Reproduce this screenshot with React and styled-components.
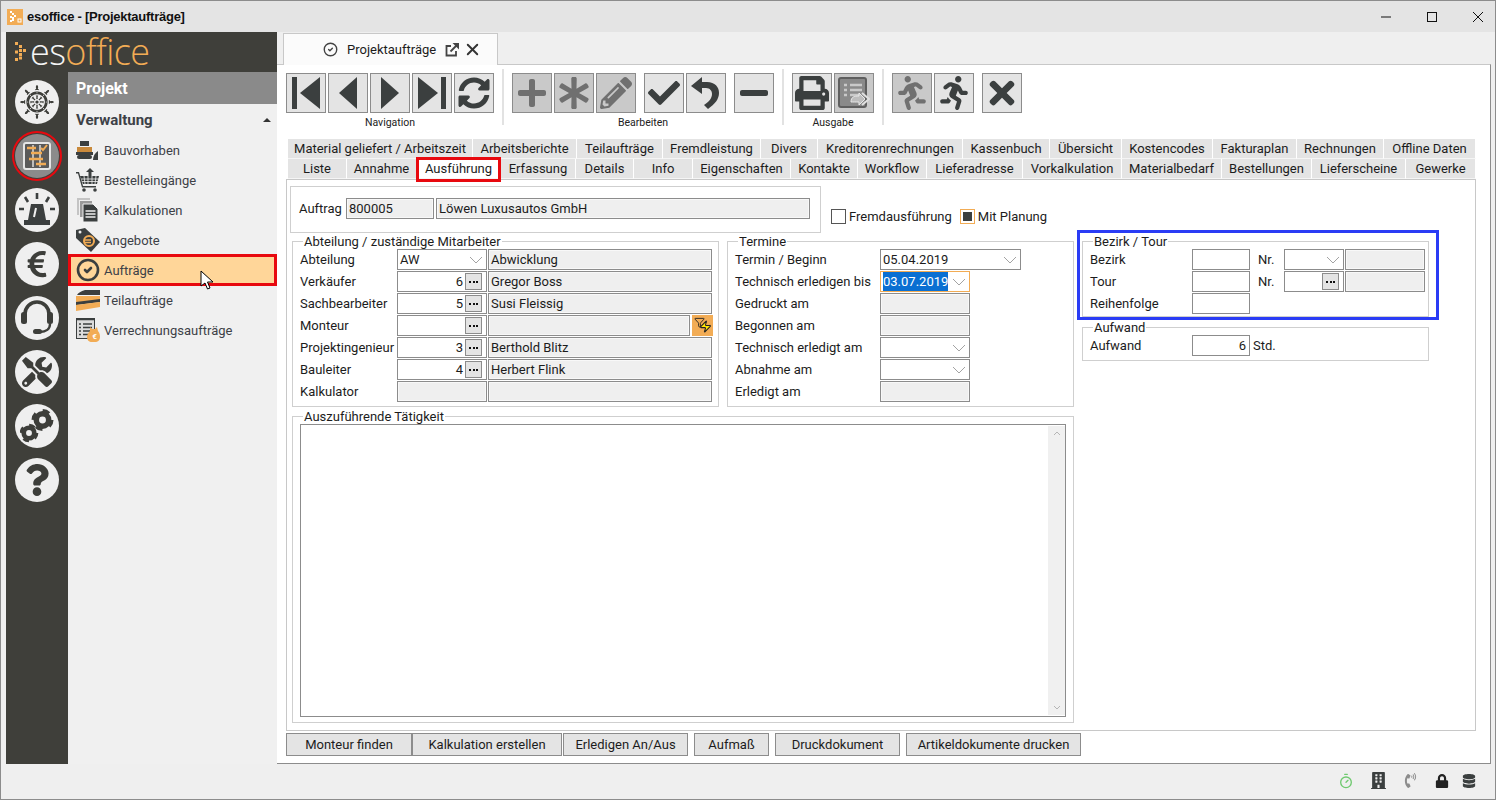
import React from 'react';
import styled, { createGlobalStyle } from 'styled-components';
import { GiShipWheel } from 'react-icons/gi';
import {
  FaEuroSign, FaTools, FaQuestion, FaPrint, FaSyncAlt, FaCheck, FaTimes, FaPlus, FaAsterisk,
  FaPencilAlt, FaMinus, FaRunning, FaLock, FaPhoneVolume, FaDatabase, FaBuilding,
} from 'react-icons/fa';
import { CircleCheck, Timer, X, Filter, Zap } from 'lucide-react';

const DARK = '#3b3f3f';
const ORANGE = '#f2ac55';

const GlobalStyle = createGlobalStyle`
  html, body { margin: 0; padding: 0; background: #efefef; }
  * { box-sizing: border-box; }
  body { font-family: Roboto, "Liberation Sans", sans-serif; font-size: 13px; color: #1c1c1c; }
`;

const Window = styled.div`
  width: 1496px;
  height: 800px;
  border: 1px solid #8c8c8c;
  background: #efefef;
  display: flex;
  flex-direction: column;
  overflow: hidden;
  position: relative;
`;

const TitleBar = styled.div`
  height: 31px;
  flex: none;
  background: #e4e4e4;
  display: flex;
  align-items: center;
  padding-left: 6px;
`;

const TitleText = styled.span`
  font-family: "Liberation Sans", Arial, sans-serif;
  font-size: 13px;
  font-weight: 700;
  letter-spacing: -0.25px;
  margin-left: 4px;
  color: #111;
`;

const WindowControls = styled.div`
  margin-left: auto;
  display: flex;
  align-items: center;
  padding-right: 12px;
  gap: 36px;
`;

const Workspace = styled.div`
  display: flex;
  height: 732px;
  flex: none;
  padding: 0 4px 0 5px;
`;

const Sidebar = styled.aside`
  width: 271px;
  flex: none;
  background: #3f3f3a;
  display: flex;
  flex-direction: column;
`;

const LogoBar = styled.div`
  height: 40px;
  flex: none;
  display: flex;
  align-items: center;
  padding-left: 9px;
  gap: 2px;
`;

const LogoText = styled.span`
  font-family: "Open Sans", sans-serif;
  font-weight: 300;
  font-size: 36px;
  line-height: 40px;
  letter-spacing: -0.6px;
  color: ${ORANGE};
  b { font-weight: 300; color: #f4f4f4; }
`;

const SideBody = styled.div`
  flex: 1;
  display: flex;
  min-height: 0;
`;

const Rail = styled.nav`
  width: 62px;
  flex: none;
  display: flex;
  flex-direction: column;
  align-items: center;
  padding-top: 8px;
  gap: 10px;
`;

const RailButton = styled.div`
  width: 44px;
  height: 44px;
  border-radius: 50%;
  background: ${({ $active }) => ($active ? '#8b8b8b' : '#efefef')};
  color: #3d3e3a;
  display: flex;
  align-items: center;
  justify-content: center;
  position: relative;
  &::after {
    content: ${({ $active }) => ($active ? '""' : 'none')};
    position: absolute;
    inset: -3px;
    border: 2.5px solid #e8090f;
    border-radius: 50%;
  }
`;

const MenuPanel = styled.div`
  flex: 1;
  background: #f0f0f0;
`;

const MenuHeader = styled.div`
  height: 32px;
  background: #8a8a8a;
  color: #fff;
  font-size: 16px;
  font-weight: 700;
  line-height: 34px;
  padding-left: 8px;
`;

const MenuSection = styled.div`
  height: 31px;
  display: flex;
  align-items: center;
  justify-content: space-between;
  padding: 1px 6px 0 8px;
  font-size: 15px;
  font-weight: 700;
  color: #3d4147;
  &::after {
    content: '';
    border: 4px solid transparent;
    border-top: 0;
    border-bottom: 4px solid #333;
  }
`;

const MenuItem = styled.div`
  height: ${({ $active }) => ($active ? '32px' : '30px')};
  margin: ${({ $active }) => ($active ? '-1px 0' : '0')};
  display: flex;
  align-items: center;
  padding-left: ${({ $active }) => ($active ? '5px' : '8px')};
  gap: 4px;
  color: #3d4147;
  font-size: 13px;
  background: ${({ $active }) => ($active ? '#ffd699' : 'transparent')};
  border: ${({ $active }) => ($active ? '3px solid #e8090f' : '0')};
  position: relative;
`;

const MenuIcon = styled.span`
  width: 24px;
  height: 24px;
  flex: none;
  display: flex;
  align-items: center;
  justify-content: center;
`;

const Cursor = styled.svg`
  position: absolute;
  left: 129px;
  top: 13px;
`;

const Main = styled.main`
  flex: 1;
  min-width: 0;
  display: flex;
  flex-direction: column;
`;

const TabStrip = styled.div`
  height: 32px;
  flex: none;
  padding: 1px 0 0 6px;
  display: flex;
`;

const DocTab = styled.div`
  width: 215px;
  height: 32px;
  background: #fbfbfb;
  border: 1px solid #c8c8c8;
  border-bottom: 0;
  display: flex;
  align-items: center;
  padding-left: 39px;
  font-size: 13px;
  position: relative;
  z-index: 1;
`;

const DocTitle = styled.span`
  margin: 0 9px 0 9px;
`;

const Content = styled.div`
  flex: 1;
  min-height: 0;
  background: #fff;
  border-top: 1px solid #c8c8c8;
  border-right: 1px solid #8c8c8c;
  border-bottom: 1px solid #8c8c8c;
  padding: 4px 0 0 9px;
`;

const Toolbar = styled.div`
  height: 70px;
  display: flex;
`;

const ToolGroup = styled.div`
  display: flex;
  flex-direction: column;
  align-items: center;
  padding-top: 4px;
`;

const ToolRow = styled.div`
  display: flex;
  gap: 2px;
`;

const ToolButton = styled.div`
  width: 40px;
  height: 40px;
  border: 1px solid #8c8c8c;
  background: ${({ $disabled }) => ($disabled ? '#c9c9c9' : '#e4e4e4')};
  color: ${({ $disabled }) => ($disabled ? '#707070' : DARK)};
  margin-left: ${({ $push }) => ($push ? '6px' : '0')};
  display: flex;
  align-items: center;
  justify-content: center;
`;

const ToolLabel = styled.span`
  font-size: 10.5px;
  margin-top: 3px;
  color: #222;
`;

const ToolSeparator = styled.div`
  width: 2px;
  height: 56px;
  margin: 0 8px 0 8px;
  background: #e2e2e2;
`;

const TabRow = styled.div`
  height: 20px;
  display: flex;
  padding-left: 2px;
`;

const Tab = styled.div`
  width: ${({ $w }) => $w}px;
  flex: none;
  display: flex;
  align-items: center;
  justify-content: center;
  background: ${({ $active }) => ($active ? '#fff' : '#e4e4e4')};
  border-right: 1px solid #fff;
  border-bottom: 1px solid #f5f5f5;
  font-size: 13px;
  white-space: nowrap;
  position: relative;
  z-index: ${({ $active }) => ($active ? 2 : 0)};
  &::after {
    content: ${({ $active }) => ($active ? '""' : 'none')};
    position: absolute;
    inset: -2px -1px -4px -1px;
    border: 3px solid #e8090f;
  }
`;

const Panel = styled.div`
  width: 1190px;
  height: 552px;
  border: 1px solid #c8c8c8;
  padding: 6px 0 0 3px;
  display: flex;
  flex-direction: column;
`;

const TopRow = styled.div`
  display: flex;
  height: 48px;
`;

const PlainGroup = styled.div`
  width: 531px;
  height: 47px;
  border: 1px solid #cfcfcf;
  padding: 11px 0 0 8px;
  display: flex;
  gap: 2px;
`;

const CheckRow = styled.div`
  display: flex;
  align-items: flex-start;
  margin: 23px 0 0 10px;
`;

const CheckItem = styled.label`
  display: flex;
  align-items: center;
  gap: 3px;
  margin-right: 8px;
  line-height: 15px;
`;

const CheckBox = styled.span`
  width: 15px;
  height: 15px;
  border: 1px solid ${({ $checked }) => ($checked ? ORANGE : '#555')};
  background: #fff;
  display: flex;
  align-items: center;
  justify-content: center;
  &::after {
    content: ${({ $checked }) => ($checked ? '""' : 'none')};
    width: 9px;
    height: 9px;
    background: ${DARK};
  }
`;

const Columns = styled.div`
  display: flex;
  gap: 8px;
  margin-left: 2px;
`;

const LeftColumn = styled.div`
  width: 782px;
  display: flex;
  flex-direction: column;
  gap: 2px;
`;

const RightColumn = styled.div`
  width: 347px;
  display: flex;
  flex-direction: column;
  gap: 3px;
`;

const GroupRow = styled.div`
  display: flex;
  gap: 8px;
`;

const Group = styled.fieldset`
  width: ${({ $w }) => $w}px;
  min-width: 0;
  margin: 0;
  border: 1px solid #cfcfcf;
  padding: 0 0 ${({ $pb }) => $pb ?? 4}px 7px;
  display: flex;
  flex-direction: column;
  gap: 1px;
  legend {
    margin-left: 3px;
    padding: 0 1px;
    height: 15px;
    line-height: 15px;
    font-size: 13px;
  }
`;

const FieldRow = styled.div`
  display: flex;
  height: 21px;
  align-items: stretch;
  gap: ${({ $gap }) => $gap ?? 1}px;
`;

const Label = styled.span`
  width: ${({ $w }) => $w}px;
  flex: none;
  line-height: 21px;
  white-space: nowrap;
`;

const Field = styled.div`
  width: ${({ $w }) => $w}px;
  flex: none;
  height: ${({ $h }) => $h ?? 21}px;
  border: 1px solid ${({ $focus }) => ($focus ? ORANGE : '#8c8c8c')};
  background: ${({ $off }) => ($off ? '#efefef' : '#fff')};
  box-shadow: ${({ $off }) => ($off ? 'inset 0 0 0 1px #f8f8f8' : 'none')};
  display: flex;
  align-items: center;
  justify-content: ${({ $right }) => ($right ? 'flex-end' : 'space-between')};
  padding: ${({ $right }) => ($right ? '0 3px 0 2px' : '0 0 0 2px')};
  line-height: 19px;
  white-space: nowrap;
  position: relative;
`;

const Selected = styled.span`
  background: #0a6fd2;
  color: #fff;
`;

const Chevron = styled.svg`
  flex: none;
  margin-right: 3px;
`;

const DotsButton = styled.span`
  width: 17px;
  height: 17px;
  flex: none;
  margin: 0 1px 0 2px;
  border: 1px solid #8c8c8c;
  background: #e4e4e4;
  display: flex;
  align-items: center;
  justify-content: center;
  gap: 1.5px;
  i {
    width: 2px;
    height: 2px;
    background: #111;
  }
`;

const FilterButton = styled.div`
  width: 21px;
  height: 21px;
  flex: none;
  margin-left: 1px;
  background: ${ORANGE};
  position: relative;
`;

const MarkedBox = styled.div`
  position: relative;
  &::after {
    content: '';
    position: absolute;
    inset: -4px -10px -3px -5px;
    border: 3px solid #2a3cf5;
    pointer-events: none;
  }
`;

const TextBox = styled.div`
  width: 766px;
  height: 293px;
  border: 1px solid #8c8c8c;
  display: flex;
  justify-content: flex-end;
  padding: 1px 0 1px 0;
`;

const ScrollBar = styled.div`
  width: 17px;
  background: #f0f0f0;
  display: flex;
  flex-direction: column;
  justify-content: space-between;
  align-items: center;
  padding: 5px 0;
`;

const ActionRow = styled.div`
  display: flex;
  margin-top: 2px;
`;

const ActionButton = styled.div`
  width: ${({ $w }) => $w}px;
  height: 23px;
  margin-left: ${({ $ml }) => $ml ?? 0}px;
  border: 1px solid #8c8c8c;
  background: #e4e4e4;
  display: flex;
  align-items: center;
  justify-content: center;
  white-space: nowrap;
`;

const StatusBar = styled.footer`
  flex: 1;
  display: flex;
  align-items: center;
  justify-content: flex-end;
  padding: 0 15px 2px 0;
`;

const StatusSlot = styled.span`
  width: ${({ $w }) => $w}px;
  display: flex;
  justify-content: center;
  align-items: center;
  position: relative;
`;

/* drawn icons */
const StepIcon = ({ dir }) => (
  <svg width="30" height="32" viewBox="0 0 30 32" style={dir === 'r' ? { transform: 'scaleX(-1)' } : undefined}>
    <path fill="currentColor" d="M1 0h5v32H1zM9 16 29 0v32z" />
  </svg>
);

const ArrowIcon = ({ dir }) => (
  <svg width="18" height="32" viewBox="0 0 18 32" style={dir === 'r' ? { transform: 'scaleX(-1)' } : undefined}>
    <path fill="currentColor" d="M0 16 18 0v32z" />
  </svg>
);

const UndoIcon = () => (
  <svg width="30" height="32" viewBox="0 0 30 32">
    <path fill="currentColor" d="M0 9 11 0v5h5c8 0 12 5 12 11 0 6-4 11-11 16l-4-4c5-3 8-7 8-11 0-3-2-6-6-6h-4v6z" />
  </svg>
);

const ListOutIcon = () => (
  <svg width="32" height="32" viewBox="0 0 32 32">
    <rect x="1" y="1" width="27" height="29" rx="2" fill="#8a8a8a" stroke="#5f5f5f" strokeWidth="2" />
    <path stroke="#c9c9c9" strokeWidth="2.4" d="M6 8h3M12 8h12M6 13h3M12 13h12M6 18h3M12 18h9" />
    <path fill="#bdbdbd" stroke="#e8e8e8" d="M13 25c0-5 3-6 8-6v-3l6 6-6 6v-3c-3 0-6 0-8 0z" />
    <path fill="none" stroke="#e0e0e0" strokeWidth="2" d="m24 16 7 6-7 6" />
  </svg>
);

const Dropdown = () => (
  <Chevron width="14" height="8" viewBox="0 0 14 8">
    <path d="m1 1 6 6 6-6" fill="none" stroke="#a3a3a3" />
  </Chevron>
);

const Dots = () => (
  <DotsButton>
    <i />
    <i />
    <i />
  </DotsButton>
);

const PlanIcon = () => (
  <svg width="30" height="30" viewBox="0 0 30 30">
    <rect x="2" y="2" width="26" height="26" rx="2" fill="#5a5a5a" stroke="#e6e6e6" strokeWidth="2" />
    <path stroke="#e6e6e6" strokeWidth="1.4" d="M11 4v22M18 4v22" />
    <path stroke={ORANGE} strokeWidth="2.6" d="M5 7h9M9 12h11M7 18h14M14 23h10" />
    <path stroke={ORANGE} strokeWidth="2" fill="none" d="m19 7 2 2 4-5" />
  </svg>
);

const SirenIcon = () => (
  <svg width="36" height="34" viewBox="0 0 36 34" fill={DARK}>
    <path d="M12 11h12l3 16H9z" />
    <rect x="5" y="27" width="26" height="5" />
    <path stroke={DARK} strokeWidth="2.6" d="M18 0v6M6 4l3 5M30 4l-3 5M0 16h5M31 16h5" />
    <path stroke="#efefef" strokeWidth="2" d="m17 15-2 9" />
  </svg>
);

const HeadsetIcon = () => (
  <svg width="34" height="38" viewBox="0 0 34 38" fill="none" stroke="#3d3e3a">
    <path strokeWidth="3.6" d="M5 20v-5a12 12 0 0 1 24 0v5" />
    <rect x="1" y="13" width="6" height="12" rx="2.5" fill="#3d3e3a" strokeWidth="0" />
    <rect x="27" y="13" width="6" height="12" rx="2.5" fill="#3d3e3a" strokeWidth="0" />
    <path strokeWidth="2.4" d="M30 25c0 5-4 8-10 8" />
    <rect x="13" y="30" width="9" height="5" rx="2.5" fill="#3d3e3a" strokeWidth="0" />
  </svg>
);

const Gear = ({ cx, cy, r }) => (
  <g>
    <circle cx={cx} cy={cy} r={r * 0.62} fill="none" stroke="#3d3e3a" strokeWidth={r * 0.55} />
    <circle
      cx={cx}
      cy={cy}
      r={r * 0.95}
      fill="none"
      stroke="#3d3e3a"
      strokeWidth={r * 0.3}
      strokeDasharray={`${r * 0.72} ${r * 0.77}`}
    />
  </g>
);

const GearsIcon = () => (
  <svg width="34" height="34" viewBox="0 0 34 34">
    <Gear cx={22.5} cy={11} r={10} />
    <Gear cx={9} cy={24} r={8.5} />
  </svg>
);

const LogoMark = () => (
  <svg width="13" height="20" viewBox="0 0 13 20" fill={ORANGE}>
    <path d="M0 0h3v3H0zM4 3h3v3H4zM8 7h3v3H8zM4 7h3v3H4zM0 8.500h3v3H0zM4 11h3v3H4zM0 16h3v3H0zM4 14.500h3v3H4z" />
  </svg>
);

const AppMark = () => (
  <svg width="16" height="16" viewBox="0 0 16 16">
    <rect width="16" height="16" fill={ORANGE} />
    <path fill="#fff" d="M3 2h2v2H3zM5 4h2v2H5zM7 6h2v2H7zM3 7h2v2H3zM5 8h2v2H5zM3 11h2v2H3zM5 10h2v2H5z" />
    <rect x="11" y="10" width="3" height="3" fill="none" stroke="#fff" />
  </svg>
);

const BulldozerIcon = () => (
  <svg width="24" height="22" viewBox="0 0 24 22" fill={DARK}>
    <rect x="4" y="2" width="9" height="5" />
    <rect x="1" y="8" width="15" height="5" fill="#c98a3c" />
    <rect x="0" y="13" width="17" height="3" />
    <rect x="1" y="16" width="15" height="4" rx="2" />
    <path d="M22 12v9h-5c0-4 2-7 5-9z" />
  </svg>
);

const CartIcon = () => (
  <svg width="24" height="24" viewBox="0 0 24 24" fill={DARK}>
    <path d="M0 4h3l4 14h13v1.500H6L2 5.500H0z" />
    <path d="M4 8h19l-2 8H7z" />
    <path stroke="#f0f0f0" strokeWidth=".8" d="M8 8l1 8M12 8v8M16 8v8M20 8l-1 8M5 11h18M6 13.500h16" />
    <circle cx="8" cy="22" r="1.800" />
    <circle cx="19" cy="22" r="1.800" />
    <path d="M14 0l4 4h-2.500v4h-3V4H10z" />
  </svg>
);

const SheetsIcon = () => (
  <svg width="24" height="24" viewBox="0 0 24 24">
    <rect x="1" y="0" width="13" height="17" fill="#c4c4c4" />
    <rect x="3.500" y="2.500" width="13" height="17" fill="#9a9a9a" stroke="#f0f0f0" />
    <path fill={DARK} stroke="#f0f0f0" d="M7 6h10l5 5v13H7z" />
    <path stroke="#f0f0f0" strokeWidth="1.400" d="M9.500 13h10M9.500 16h10M9.500 19h10" />
  </svg>
);

const TagIcon = () => (
  <svg width="24" height="24" viewBox="0 0 24 24">
    <path fill={DARK} d="M0 2 9 0l15 14-9 10L0 10z" />
    <circle cx="4" cy="4" r="1.500" fill="#f0f0f0" />
    <circle cx="13" cy="13" r="5" fill="none" stroke={ORANGE} strokeWidth="2" />
    <path stroke={ORANGE} strokeWidth="1.500" d="M8 12h7M8 14.500h7" />
  </svg>
);

const SliceIcon = () => (
  <svg width="24" height="24" viewBox="0 0 24 24">
    <path fill={DARK} d="M9 2h15v5H1C2 5 5 3 9 2z" />
    <path fill={ORANGE} d="M0 8h24v6L0 17z" />
    <path fill={DARK} d="M0 14 24 11v3L0 17z" />
    <path fill={ORANGE} d="M0 17l24-3v5L0 23z" />
  </svg>
);

const BillingIcon = () => (
  <svg width="24" height="24" viewBox="0 0 24 24">
    <rect x=".5" y=".5" width="18" height="20" fill="#dcdcdc" stroke={DARK} />
    <path stroke={DARK} strokeWidth="1.500" d="M0 1.500h19M3 6h2M7 6h9M3 9.500h2M7 9.500h9M3 13h2M7 13h7M3 16.500h2M7 16.500h6" />
    <path fill={ORANGE} d="M14 9l2 2h3l2-2 1 4c2 2 2 5 2 6 0 3-2 5-5 5h-3c-3 0-5-2-5-5 0-2 1-4 3-6z" />
    <text x="18.500" y="21" fontSize="8" fontWeight="700" fill="#fff" textAnchor="middle">€</text>
  </svg>
);

const CursorIcon = () => (
  <Cursor width="14" height="20" viewBox="0 0 14 20">
    <path d="M1 1v15l4-3 2.500 6 2.500-1-2.500-6H13z" fill="#fff" stroke="#000" />
  </Cursor>
);

const ExternalIcon = () => (
  <svg width="14" height="14" viewBox="0 0 14 14" fill="none" stroke="#444" strokeWidth="1.800">
    <path d="M11 8v4.500H1.500V3H6" />
    <path d="M5.500 8.500 12 2" />
    <path fill="#444" strokeWidth="0" d="M7.500 0H14v6.500z" />
  </svg>
);

const menuItems = [
  ['Bauvorhaben', <BulldozerIcon />],
  ['Bestelleingänge', <CartIcon />],
  ['Kalkulationen', <SheetsIcon />],
  ['Angebote', <TagIcon />],
  ['Aufträge', <CircleCheck size={24} color={DARK} strokeWidth={2.6} />, true],
  ['Teilaufträge', <SliceIcon />],
  ['Verrechnungsaufträge', <BillingIcon />],
];

const tabsTop = [
  ['Material geliefert / Arbeitszeit', 185], ['Arbeitsberichte', 104], ['Teilaufträge', 86], ['Fremdleistung', 98],
  ['Divers', 57], ['Kreditorenrechnungen', 145], ['Kassenbuch', 87], ['Übersicht', 72], ['Kostencodes', 91],
  ['Fakturaplan', 84], ['Rechnungen', 87], ['Offline Daten', 92],
];

const tabsBottom = [
  ['Liste', 59], ['Annahme', 70], ['Ausführung', 84, true], ['Erfassung', 75], ['Details', 58], ['Info', 59],
  ['Eigenschaften', 98], ['Kontakte', 67], ['Workflow', 69], ['Lieferadresse', 96], ['Vorkalkulation', 99],
  ['Materialbedarf', 100], ['Bestellungen', 90], ['Lieferscheine', 94], ['Gewerke', 70],
];

const actions = [
  ['Monteur finden', 126, 0], ['Kalkulation erstellen', 150, 0], ['Erledigen An/Aus', 125, 1],
  ['Aufmaß', 75, 6], ['Druckdokument', 125, 6], ['Artikeldokumente drucken', 175, 6],
];

const staff = [
  ['Verkäufer', '6', 'Gregor Boss'],
  ['Sachbearbeiter', '5', 'Susi Fleissig'],
  ['Monteur', '', '', true],
  ['Projektingenieur', '3', 'Berthold Blitz'],
  ['Bauleiter', '4', 'Herbert Flink'],
];

export default function App() {
  return (
    <Window>
      <GlobalStyle />
      <TitleBar>
        <AppMark />
        <TitleText>esoffice - [Projektaufträge]</TitleText>
        <WindowControls>
          <svg width="10" height="10" viewBox="0 0 10 10"><path d="M0 5h10" stroke="#111" /></svg>
          <svg width="10" height="10" viewBox="0 0 10 10"><rect x=".5" y=".5" width="9" height="9" fill="none" stroke="#111" /></svg>
          <svg width="10" height="10" viewBox="0 0 10 10"><path d="m0 0 10 10M10 0 0 10" stroke="#111" /></svg>
        </WindowControls>
      </TitleBar>

      <Workspace>
        <Sidebar>
          <LogoBar>
            <LogoMark />
            <LogoText><b>es</b>office</LogoText>
          </LogoBar>
          <SideBody>
            <Rail>
              <RailButton><GiShipWheel size={36} /></RailButton>
              <RailButton $active><PlanIcon /></RailButton>
              <RailButton><SirenIcon /></RailButton>
              <RailButton><FaEuroSign size={30} /></RailButton>
              <RailButton><HeadsetIcon /></RailButton>
              <RailButton><FaTools size={30} /></RailButton>
              <RailButton><GearsIcon /></RailButton>
              <RailButton><FaQuestion size={32} /></RailButton>
            </Rail>
            <MenuPanel>
              <MenuHeader>Projekt</MenuHeader>
              <MenuSection>Verwaltung</MenuSection>
              {menuItems.map(([label, icon, active]) => (
                <MenuItem key={label} $active={active}>
                  <MenuIcon>{icon}</MenuIcon>
                  {label}
                  {active && <CursorIcon />}
                </MenuItem>
              ))}
            </MenuPanel>
          </SideBody>
        </Sidebar>

        <Main>
          <TabStrip>
            <DocTab>
              <CircleCheck size={15} color="#444" strokeWidth={2.2} />
              <DocTitle>Projektaufträge</DocTitle>
              <ExternalIcon />
              <X size={19} color="#333" strokeWidth={2.4} style={{ marginLeft: 4 }} />
            </DocTab>
          </TabStrip>

          <Content>
            <Toolbar>
              <ToolGroup>
                <ToolRow>
                  <ToolButton><StepIcon /></ToolButton>
                  <ToolButton><ArrowIcon /></ToolButton>
                  <ToolButton><ArrowIcon dir="r" /></ToolButton>
                  <ToolButton><StepIcon dir="r" /></ToolButton>
                  <ToolButton><FaSyncAlt size={32} /></ToolButton>
                </ToolRow>
                <ToolLabel>Navigation</ToolLabel>
              </ToolGroup>
              <ToolSeparator />
              <ToolGroup>
                <ToolRow>
                  <ToolButton $disabled><FaPlus size={32} /></ToolButton>
                  <ToolButton $disabled><FaAsterisk size={32} /></ToolButton>
                  <ToolButton $disabled><FaPencilAlt size={32} /></ToolButton>
                  <ToolButton $push><FaCheck size={32} /></ToolButton>
                  <ToolButton><UndoIcon /></ToolButton>
                  <ToolButton $push><FaMinus size={32} /></ToolButton>
                </ToolRow>
                <ToolLabel>Bearbeiten</ToolLabel>
              </ToolGroup>
              <ToolSeparator />
              <ToolGroup>
                <ToolRow>
                  <ToolButton><FaPrint size={34} /></ToolButton>
                  <ToolButton $disabled><ListOutIcon /></ToolButton>
                </ToolRow>
                <ToolLabel>Ausgabe</ToolLabel>
              </ToolGroup>
              <ToolSeparator />
              <ToolGroup>
                <ToolRow>
                  <ToolButton $disabled><FaRunning size={34} style={{ transform: 'scaleX(-1)' }} /></ToolButton>
                  <ToolButton><FaRunning size={34} /></ToolButton>
                  <ToolButton $push><FaTimes size={36} /></ToolButton>
                </ToolRow>
              </ToolGroup>
            </Toolbar>

            <TabRow>
              {tabsTop.map(([label, w]) => <Tab key={label} $w={w}>{label}</Tab>)}
            </TabRow>
            <TabRow>
              {tabsBottom.map(([label, w, active]) => <Tab key={label} $w={w} $active={active}>{label}</Tab>)}
            </TabRow>

            <Panel>
              <TopRow>
                <PlainGroup>
                  <Label $w={45}>Auftrag</Label>
                  <Field $w={88} $off>800005</Field>
                  <Field $w={374} $off>Löwen Luxusautos GmbH</Field>
                </PlainGroup>
                <CheckRow>
                  <CheckItem><CheckBox />Fremdausführung</CheckItem>
                  <CheckItem><CheckBox $checked />Mit Planung</CheckItem>
                </CheckRow>
              </TopRow>

              <Columns>
                <LeftColumn>
                  <GroupRow>
                    <Group $w={427}>
                      <legend>Abteilung / zuständige Mitarbeiter</legend>
                      <FieldRow>
                        <Label $w={96}>Abteilung</Label>
                        <Field $w={90}>AW<Dropdown /></Field>
                        <Field $w={224} $off>Abwicklung</Field>
                      </FieldRow>
                      {staff.map(([label, nr, name, filter]) => (
                        <FieldRow key={label}>
                          <Label $w={96}>{label}</Label>
                          <Field $w={90} $right>{nr}<Dots /></Field>
                          <Field $w={filter ? 202 : 224} $off>{name}</Field>
                          {filter && (
                            <FilterButton>
                              <Filter size={11} color="#222" style={{ position: 'absolute', left: 2, top: 2 }} />
                              <Zap size={13} color="#222" fill="#ffe600" style={{ position: 'absolute', left: 7, top: 5 }} />
                            </FilterButton>
                          )}
                        </FieldRow>
                      ))}
                      <FieldRow>
                        <Label $w={96}>Kalkulator</Label>
                        <Field $w={90} $off />
                        <Field $w={224} $off />
                      </FieldRow>
                    </Group>

                    <Group $w={347}>
                      <legend>Termine</legend>
                      <FieldRow>
                        <Label $w={144}>Termin / Beginn</Label>
                        <Field $w={141}>05.04.2019<Dropdown /></Field>
                      </FieldRow>
                      <FieldRow>
                        <Label $w={144}>Technisch erledigen bis</Label>
                        <Field $w={90} $focus><Selected>03.07.2019</Selected><Dropdown /></Field>
                      </FieldRow>
                      <FieldRow>
                        <Label $w={144}>Gedruckt am</Label>
                        <Field $w={90} $off />
                      </FieldRow>
                      <FieldRow>
                        <Label $w={144}>Begonnen am</Label>
                        <Field $w={90} $off />
                      </FieldRow>
                      <FieldRow>
                        <Label $w={144}>Technisch erledigt am</Label>
                        <Field $w={90}><span /><Dropdown /></Field>
                      </FieldRow>
                      <FieldRow>
                        <Label $w={144}>Abnahme am</Label>
                        <Field $w={90}><span /><Dropdown /></Field>
                      </FieldRow>
                      <FieldRow>
                        <Label $w={144}>Erledigt am</Label>
                        <Field $w={90} $off />
                      </FieldRow>
                    </Group>
                  </GroupRow>

                  <Group $w={782} $pb={5}>
                    <legend>Auszuführende Tätigkeit</legend>
                    <TextBox>
                      <ScrollBar>
                        <svg width="8" height="5" viewBox="0 0 8 5"><path d="m1 4 3-3 3 3" fill="none" stroke="#b5b5b5" /></svg>
                        <svg width="8" height="5" viewBox="0 0 8 5"><path d="m1 1 3 3 3-3" fill="none" stroke="#b5b5b5" /></svg>
                      </ScrollBar>
                    </TextBox>
                  </Group>
                </LeftColumn>

                <RightColumn>
                  <MarkedBox>
                    <Group $w={347} $pb={2}>
                      <legend>Bezirk / Tour</legend>
                      <FieldRow>
                        <Label $w={101}>Bezirk</Label>
                        <Field $w={58} />
                        <Label $w={25} style={{ marginLeft: 7 }}>Nr.</Label>
                        <Field $w={60}><span /><Dropdown /></Field>
                        <Field $w={80} $off />
                      </FieldRow>
                      <FieldRow>
                        <Label $w={101}>Tour</Label>
                        <Field $w={58} />
                        <Label $w={25} style={{ marginLeft: 7 }}>Nr.</Label>
                        <Field $w={60} $right><Dots /></Field>
                        <Field $w={80} $off />
                      </FieldRow>
                      <FieldRow>
                        <Label $w={101}>Reihenfolge</Label>
                        <Field $w={58} />
                      </FieldRow>
                    </Group>
                  </MarkedBox>
                  <Group $w={347}>
                    <legend>Aufwand</legend>
                    <FieldRow $gap={3}>
                      <Label $w={99}>Aufwand</Label>
                      <Field $w={58} $right>6</Field>
                      <Label $w={30}>Std.</Label>
                    </FieldRow>
                  </Group>
                </RightColumn>
              </Columns>
            </Panel>

            <ActionRow>
              {actions.map(([label, w, ml]) => <ActionButton key={label} $w={w} $ml={ml}>{label}</ActionButton>)}
            </ActionRow>
          </Content>
        </Main>
      </Workspace>

      <StatusBar>
        <StatusSlot $w={32}><Timer size={16} color="#6fc96f" /></StatusSlot>
        <StatusSlot $w={32}><FaBuilding size={17} color={DARK} /></StatusSlot>
        <StatusSlot $w={32}><FaPhoneVolume size={15} color="#8c8c8c" /></StatusSlot>
        <StatusSlot $w={32}><FaLock size={14} color="#222" /></StatusSlot>
        <StatusSlot $w={22}><FaDatabase size={14} color={DARK} /></StatusSlot>
      </StatusBar>
    </Window>
  );
}
